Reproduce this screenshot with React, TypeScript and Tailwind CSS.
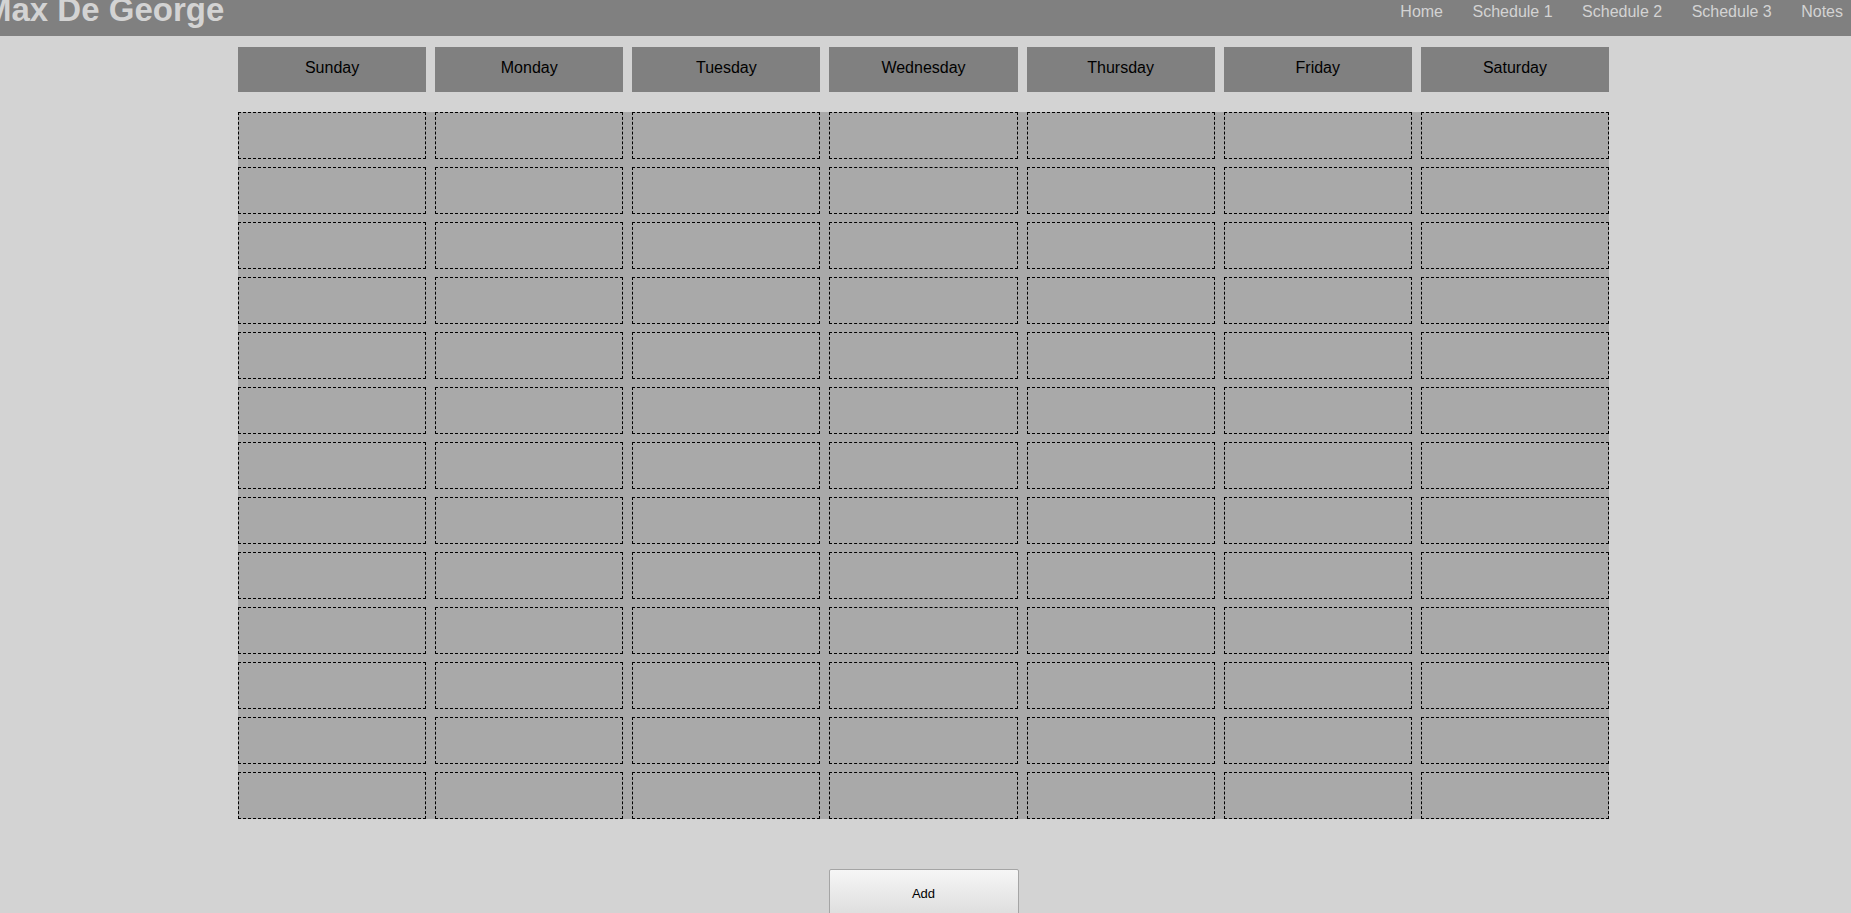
import React from "react";

const days = ["Sunday", "Monday", "Tuesday", "Wednesday", "Thursday", "Friday", "Saturday"];
const links = ["Home", "Schedule 1", "Schedule 2", "Schedule 3", "Notes"];

export default function App() {
  const cells = Array.from({ length: 13 * 7 });
  return (
    <div className="min-h-[913px] w-full bg-[#d3d3d3] overflow-hidden" style={{ fontFamily: '"Liberation Sans", Arial, sans-serif' }}>
      <div className="h-[36px] bg-[#808080] flex justify-between overflow-hidden">
        <div className="ml-[-16px] mt-[-7px] text-[33px] leading-[33px] font-bold text-[#d3d3d3] whitespace-nowrap">
          Max De George
        </div>
        <div className="flex gap-[29.5px] pr-[8px] pt-[2px] text-[16px] leading-[19px] text-[#d3d3d3]">
          {links.map((l) => (
            <span key={l} className="whitespace-nowrap">{l}</span>
          ))}
        </div>
      </div>
      <div className="ml-[238px] w-[1371px]">
        <div className="mt-[11px] grid grid-cols-7 gap-x-[9px]">
          {days.map((d) => (
            <div key={d} className="h-[45px] bg-[#808080] text-center pt-[12px] text-[16px] leading-[18px] text-black">
              {d}
            </div>
          ))}
        </div>
        <div className="mt-[20px] grid grid-cols-7 gap-x-[9px] gap-y-[8px] bg-[#a9a9a9]">
          {cells.map((_, i) => (
            <div key={i} className="h-[47px] border border-dashed border-black bg-[#a9a9a9]" />
          ))}
        </div>
        <div className="mt-[50px] flex justify-center">
          <button className="w-[190px] h-[50px] rounded-[2px] border border-[#a5a5a5] bg-gradient-to-b from-[#f6f6f6] to-[#dcdcdc] text-[13px] text-black">
            Add
          </button>
        </div>
      </div>
    </div>
  );
}
